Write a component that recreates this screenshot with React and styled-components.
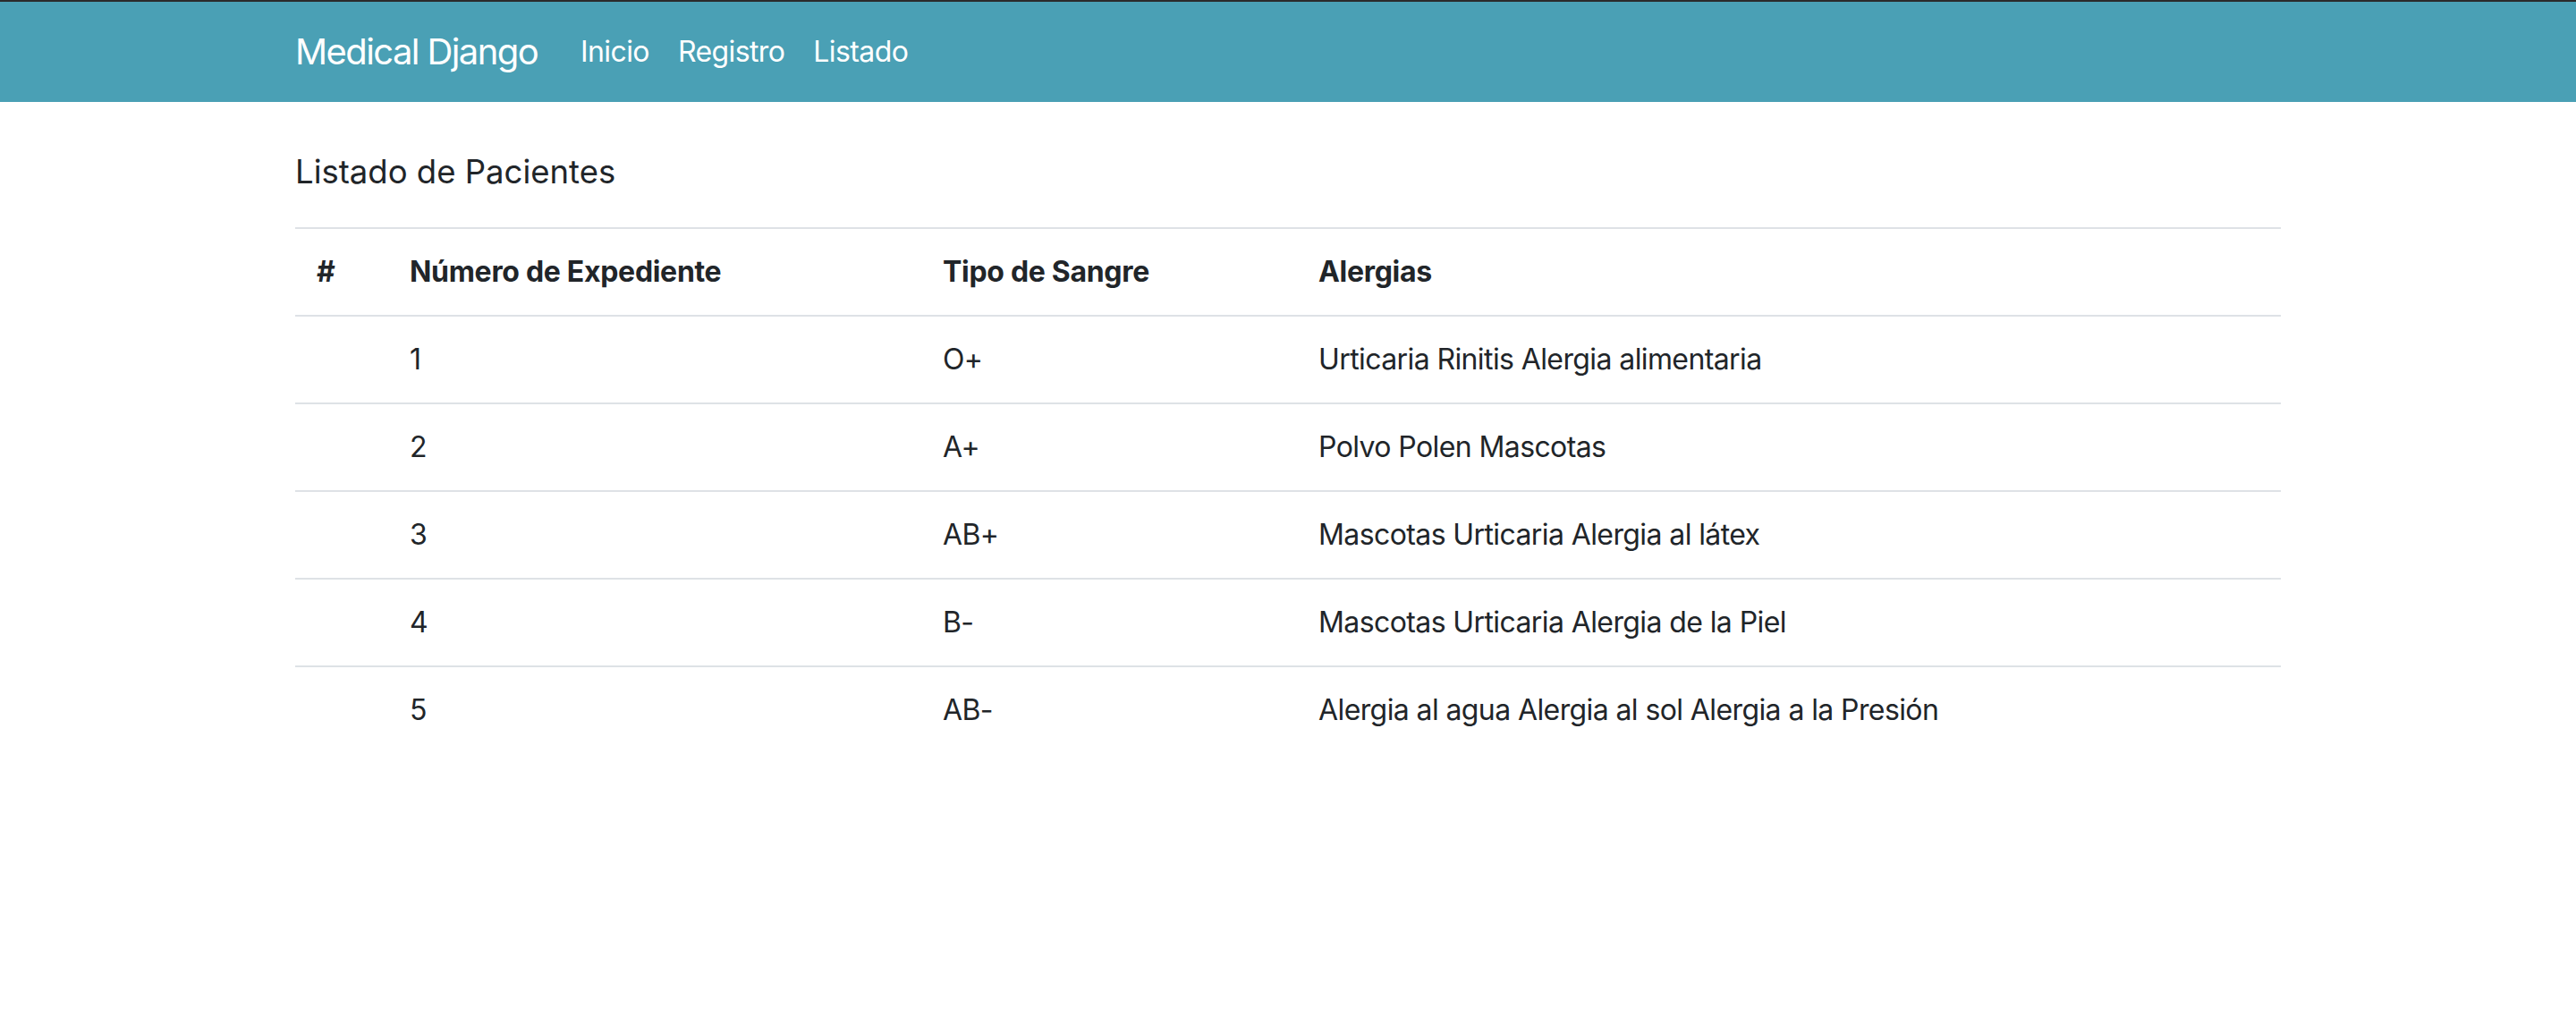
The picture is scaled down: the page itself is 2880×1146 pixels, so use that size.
import React from 'react';
import styled, { createGlobalStyle } from 'styled-components';

const GlobalStyle = createGlobalStyle`
    html, body {
        margin: 0;
        padding: 0;
        background: #ffffff;
    }
    body {
        font-family: Inter, 'Noto Sans', 'Liberation Sans', sans-serif;
        font-size: 32px;
        letter-spacing: -0.6px;
        color: #212529;
    }
`

const TopLine = styled.div`
    height: 2px;
    background: #2b2b2b;
`

const Navbar = styled.nav`
    height: 112px;
    background: #4aa0b5;
    display: flex;
    align-items: center;
`

const Container = styled.div`
    width: 100%;
    max-width: 2280px;
    margin: 0 auto;
    padding: 0 30px;
    box-sizing: border-box;
`

const NavInner = styled(Container)`
    display: flex;
    align-items: center;
`

const Brand = styled.a`
    color: #ffffff;
    font-size: 40px;
    line-height: 60px;
    letter-spacing: -1.6px;
    margin-right: 32px;
    text-decoration: none;
    white-space: nowrap;
`

const NavLinks = styled.ul`
    display: flex;
    list-style: none;
    margin: 0;
    padding: 0;
`

const NavLink = styled.a`
    display: block;
    padding: 16px;
    color: #ffffff;
    font-size: 32px;
    line-height: 48px;
    text-decoration: none;
`

const Title = styled.h5`
    font-size: 36.5px;
    font-weight: 400;
    line-height: 43px;
    letter-spacing: 0;
    margin: 57px 0 40px;
`

const Table = styled.table`
    width: 100%;
    border-collapse: collapse;
    table-layout: fixed;
`

const Th = styled.th`
    box-sizing: border-box;
    width: ${(p) => p.w}px;
    text-align: left;
    font-weight: 700;
    letter-spacing: -0.3px;
    padding: 24px;
    line-height: 48px;
    border-top: 2px solid #dee2e6;
`

const Td = styled.td`
    padding: 24px;
    line-height: 48px;
    border-top: 2px solid #dee2e6;
`

const pacientes = [
    { expediente: 1, sangre: 'O+', alergias: 'Urticaria Rinitis Alergia alimentaria' },
    { expediente: 2, sangre: 'A+', alergias: 'Polvo Polen Mascotas' },
    { expediente: 3, sangre: 'AB+', alergias: 'Mascotas Urticaria Alergia al látex' },
    { expediente: 4, sangre: 'B-', alergias: 'Mascotas Urticaria Alergia de la Piel' },
    { expediente: 5, sangre: 'AB-', alergias: 'Alergia al agua Alergia al sol Alergia a la Presión' },
];

const App = () => {
    return (
        <div>
            <GlobalStyle />
            <TopLine />
            <Navbar>
                <NavInner>
                    <Brand href="#">Medical Django</Brand>
                    <NavLinks>
                        <li><NavLink href="#">Inicio</NavLink></li>
                        <li><NavLink href="#">Registro</NavLink></li>
                        <li><NavLink href="#">Listado</NavLink></li>
                    </NavLinks>
                </NavInner>
            </Navbar>
            <Container>
                <Title>Listado de Pacientes</Title>
                <Table>
                    <thead>
                        <tr>
                            <Th w={104}>#</Th>
                            <Th w={596}>Número de Expediente</Th>
                            <Th w={420}>Tipo de Sangre</Th>
                            <Th w={1100}>Alergias</Th>
                        </tr>
                    </thead>
                    <tbody>
                        {pacientes.map((p) => (
                            <tr key={p.expediente}>
                                <Td></Td>
                                <Td>{p.expediente}</Td>
                                <Td>{p.sangre}</Td>
                                <Td>{p.alergias}</Td>
                            </tr>
                        ))}
                    </tbody>
                </Table>
            </Container>
        </div>
    )
};

export default App;
